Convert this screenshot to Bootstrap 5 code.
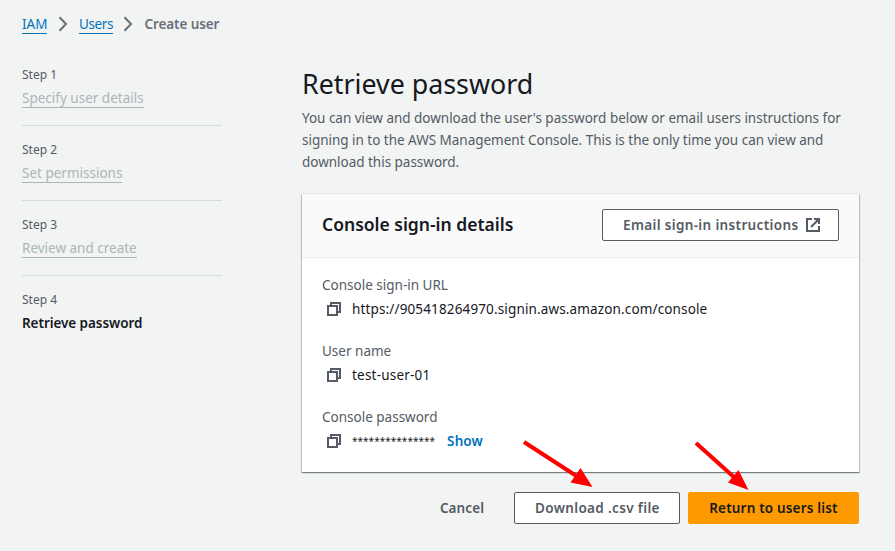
<!DOCTYPE html>
<html lang="en">
<head>
<meta charset="utf-8">
<meta name="viewport" content="width=device-width, initial-scale=1">
<title>Create user | IAM</title>
<link href="https://cdn.jsdelivr.net/npm/bootstrap@5.3.0/dist/css/bootstrap.min.css" rel="stylesheet">
<style>
body{background:#f2f3f3;color:#16191f;font-family:"Noto Sans","Open Sans",sans-serif;font-size:13.5px;line-height:22px;width:895px;height:551px;overflow:hidden}
.page{padding:13px 36px 0 22px}
.crumbs{height:22px}
.ulink{display:inline-block;line-height:18px;border-bottom:1px solid currentColor;text-decoration:none;white-space:nowrap}
.crumbs .ulink{color:#0073bb}
.crumb-users{letter-spacing:-.4px}
.crumbs svg{margin:0 11px 0 10.5px}
.crumb-now{color:#687078;font-weight:600;letter-spacing:-.1px}
.steps{width:200px;margin-right:80px;padding-top:29px}
.step{height:75px}
.step + .step{border-top:1px solid #d5dbdb;padding-top:13px;margin-top:-14px;height:89px}
.step-no{font-size:12px;line-height:22px;color:#545b64;display:block}
.step .ulink{color:#aab7b8;margin-top:3px}
.step-now{display:block;font-weight:600;margin-top:1px;letter-spacing:-.06px}
.main-col{width:557px;padding-top:31px}
h1{font-size:26.8px;line-height:36px;font-weight:400;margin:0 0 5px}
.intro{color:#545b64;margin:0 0 21px;white-space:nowrap;letter-spacing:-.02px}
.panel{background:#fff;border:0;border-radius:0;height:278px;box-shadow:0 1px 1px 0 rgba(0,28,36,.3),1px 1px 1px 0 rgba(0,28,36,.15),-1px 1px 1px 0 rgba(0,28,36,.15),0 0 0 1px rgba(0,28,36,.05)}
.panel-head{height:64px;background:#fafafa;border-bottom:1px solid #eaeded;padding:0 20px 1px}
h2{font-size:17.5px;line-height:22px;font-weight:600;margin:0 0 2px}
.panel-body{padding:16px 20px 0}
.field-label{color:#545b64;display:block;margin-bottom:2px}
.field{margin-bottom:20px}
.field svg{margin:0 11px 0 5px}
.url{letter-spacing:.14px}
.uname{letter-spacing:.2px}
.stars{font-size:10px;line-height:22px;letter-spacing:.03px}
.act{height:32px;padding:0 20px;border:1px solid #545b64;border-radius:2px;background:#fff;color:#545b64;font-size:13.5px;font-weight:600;line-height:20px;letter-spacing:.36px;white-space:nowrap}
.act-main{background:#ff9900;border-color:#ff9900;color:#16191f;letter-spacing:.18px}
.act-plain{background:none;border-color:transparent;letter-spacing:.1px}
.mail-icon{margin-left:8px}
.w-mail{width:237px;padding:0 17px 0 20px}.w-cancel{width:88px}.w-csv{width:166px}.w-return{width:171px}
.show-link{color:#0073bb;font-weight:600;text-decoration:none;margin-left:12px;letter-spacing:.1px}
.arrows{left:0;top:0;pointer-events:none}
.actions{margin-top:20px}
</style>
<script src="https://cdn.jsdelivr.net/npm/bootstrap@5.3.0/dist/js/bootstrap.bundle.min.js"></script>
</head>
<body class="position-relative">
<svg width="0" height="0" class="position-absolute">
  <symbol id="copy" viewBox="0 0 14 14"><path d="M1 4h9v9H1zM4 4V1h9v9h-3" fill="none" stroke="#545b64" stroke-width="2"/></symbol>
  <symbol id="chev" viewBox="0 0 10 16"><path d="M1.500 1.200 8 8l-6.500 6.800" fill="none" stroke="#687078" stroke-width="2"/></symbol>
</svg>
<div class="page">
  <nav class="crumbs d-flex align-items-center" aria-label="breadcrumb">
    <a href="#" class="ulink">IAM</a>
    <svg width="10" height="16"><use href="#chev"/></svg>
    <a href="#" class="ulink crumb-users">Users</a>
    <svg width="10" height="16"><use href="#chev"/></svg>
    <span class="crumb-now">Create user</span>
  </nav>
  <div class="d-flex">
    <aside class="steps flex-shrink-0">
      <div class="step"><span class="step-no">Step 1</span><a href="#" class="ulink">Specify user details</a></div>
      <div class="step"><span class="step-no">Step 2</span><a href="#" class="ulink">Set permissions</a></div>
      <div class="step"><span class="step-no">Step 3</span><a href="#" class="ulink">Review and create</a></div>
      <div class="step"><span class="step-no">Step 4</span><span class="step-now">Retrieve password</span></div>
    </aside>
    <main class="main-col flex-shrink-0">
      <h1>Retrieve password</h1>
      <p class="intro">You can view and download the user's password below or email users instructions for<br>signing in to the AWS Management Console. This is the only time you can view and<br>download this password.</p>
      <section class="card panel">
        <div class="panel-head d-flex align-items-center justify-content-between">
          <h2>Console sign-in details</h2>
          <button class="btn act w-mail d-flex align-items-center"><span>Email sign-in instructions</span>
            <svg class="mail-icon flex-shrink-0" width="14" height="14" viewBox="0 0 14 14" fill="none" stroke="#545b64" stroke-width="2"><path d="M6 1H1v12h12V8M8 1h5v5M13 1 5 9"/></svg></button>
        </div>
        <div class="panel-body">
          <div class="field"><span class="field-label">Console sign-in URL</span><div class="d-flex align-items-center"><svg width="14" height="14"><use href="#copy"/></svg><span class="url">https://905418264970.signin.aws.amazon.com/console</span></div></div>
          <div class="field"><span class="field-label">User name</span><div class="d-flex align-items-center"><svg width="14" height="14"><use href="#copy"/></svg><span class="uname">test-user-01</span></div></div>
          <div class="field"><span class="field-label">Console password</span><div class="d-flex align-items-center"><svg width="14" height="14"><use href="#copy"/></svg><span class="stars">***************</span><a href="#" class="show-link">Show</a></div></div>
        </div>
      </section>
      <div class="actions d-flex justify-content-end">
        <button class="btn act act-plain w-cancel me-2">Cancel</button>
        <button class="btn act w-csv me-2">Download .csv file</button>
        <button class="btn act act-main w-return">Return to users list</button>
      </div>
    </main>
  </div>
</div>
<svg class="arrows position-absolute" width="895" height="551" viewBox="0 0 895 551" fill="red" stroke="red">
  <path d="M524 442 578 477M696 443 736 479" stroke-width="4" fill="none"/>
  <path d="M580.500 468 592.500 487 570.500 482.500zM738.500 470 748.500 490 728 482.500z" stroke="none"/>
</svg>
</body>
</html>
